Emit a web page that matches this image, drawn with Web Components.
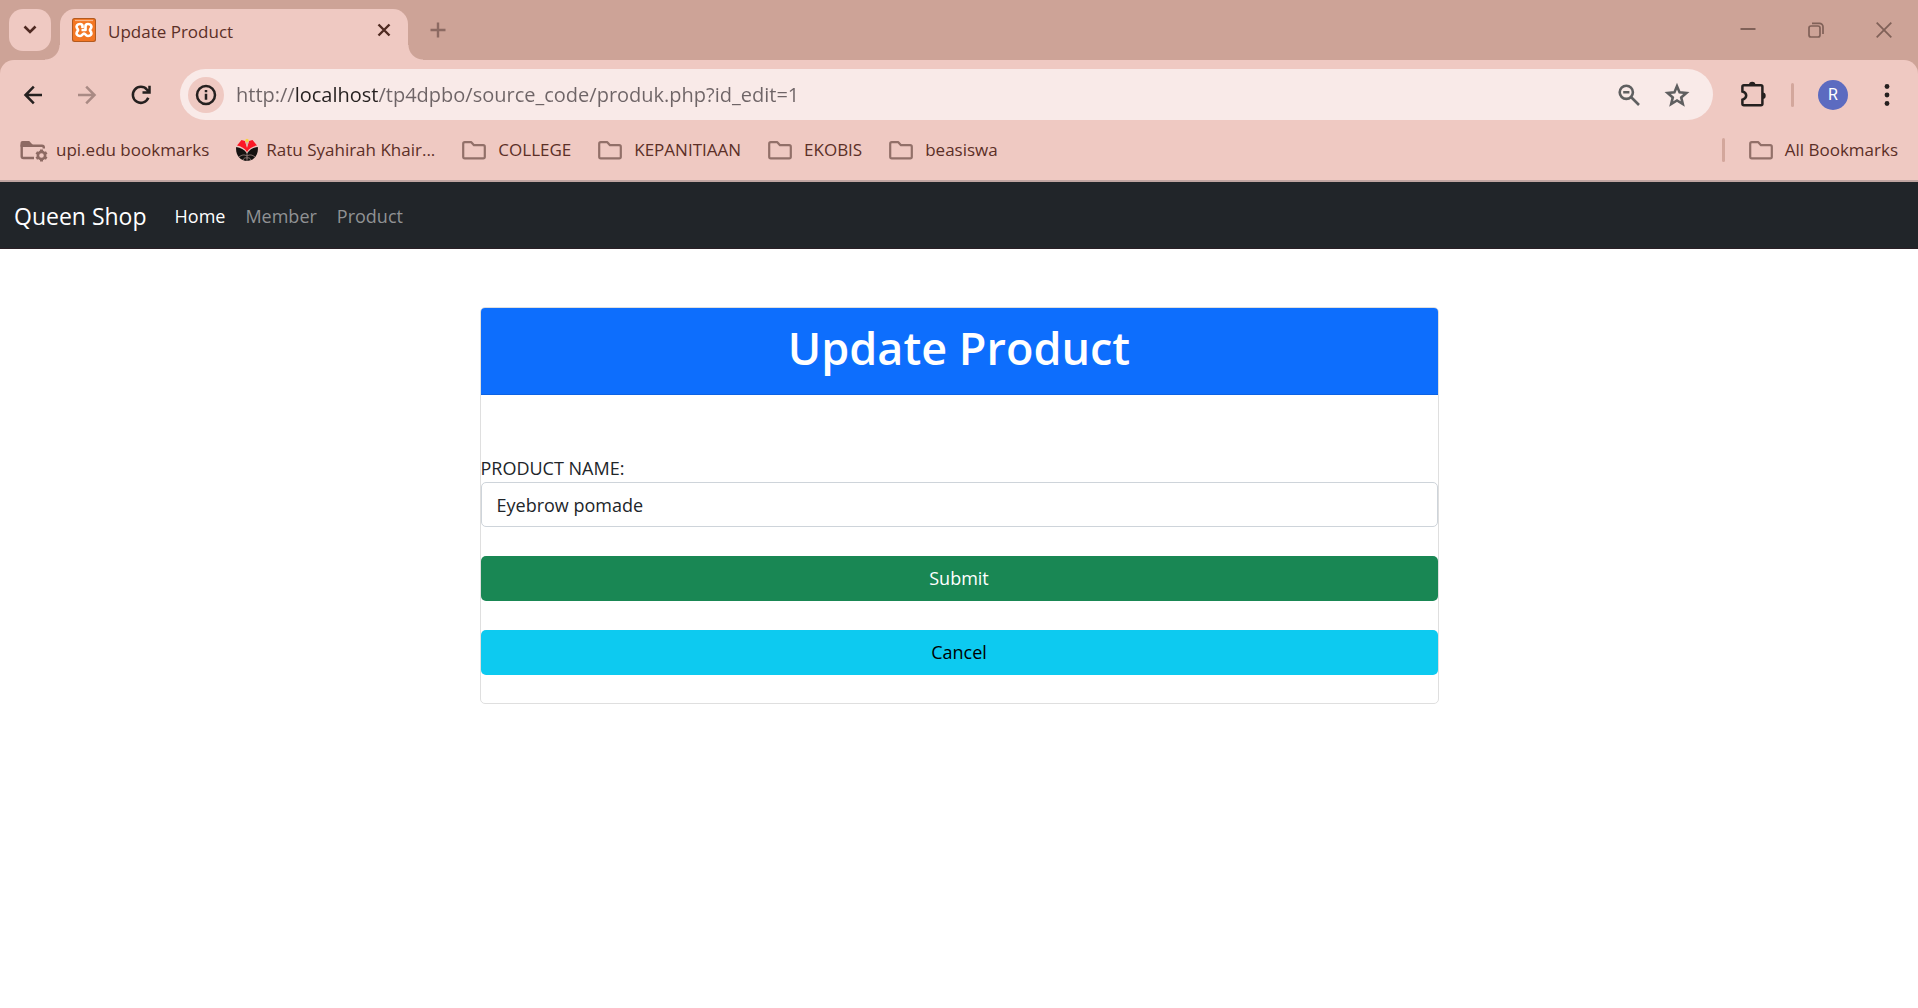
<!DOCTYPE html>
<html lang="en">
<head>
<meta charset="utf-8">
<title>Update Product</title>
<style>
  body { margin: 0; background: #fff; font-family: "Open Sans", "Noto Sans", sans-serif; }
</style>
</head>
<body>
<browser-frame>
  <tab-strip slot="tabs">Update Product</tab-strip>
  <tool-bar slot="toolbar"></tool-bar>
  <bookmarks-bar slot="bookmarks">
    <bookmark-item icon="managed">upi.edu bookmarks</bookmark-item>
    <bookmark-item icon="crest">Ratu Syahirah Khair...</bookmark-item>
    <bookmark-item>COLLEGE</bookmark-item>
    <bookmark-item>KEPANITIAAN</bookmark-item>
    <bookmark-item>EKOBIS</bookmark-item>
    <bookmark-item>beasiswa</bookmark-item>
    <bookmark-item slot="end">All Bookmarks</bookmark-item>
  </bookmarks-bar>
</browser-frame>
<shop-navbar>
  <span slot="brand">Queen Shop</span>
  <nav-link active>Home</nav-link>
  <nav-link>Member</nav-link>
  <nav-link>Product</nav-link>
</shop-navbar>
<product-card>
  <span slot="title">Update Product</span>
  <product-form></product-form>
</product-card>

<script>
const RESET = `
  :host, *, *::before, *::after { box-sizing: border-box; }
  button { border: 0; padding: 0; margin: 0; background: none; font: inherit; color: inherit; display: grid; place-items: center; flex: none; cursor: pointer; }
  a { color: inherit; text-decoration: none; }
  svg { display: block; flex: none; fill: none; }
`;
function define(name, css, html) {
  customElements.define(name, class extends HTMLElement {
    constructor() {
      super();
      this.attachShadow({ mode: "open" }).innerHTML =
        `<style>${RESET}${css}</style>` + (typeof html === "function" ? html(this) : html);
    }
  });
}

define("browser-frame", `
  :host { display: block; background: #cda397; color: #5b2f27; font-size: 17px; }
  .panel { background: #efc9c2; border-radius: 14px 14px 0 0; border-bottom: 2px solid #c0a5a1; }
`, `<slot name="tabs"></slot><div class="panel"><slot name="toolbar"></slot><slot name="bookmarks"></slot></div>`);

define("tab-strip", `
  :host { display: flex; height: 60px; padding: 9px 0 0 9px; line-height: 24px; }
  .search { width: 42px; height: 42px; border-radius: 14px; background: #efc9c2; }
  .tab { position: relative; width: 348px; margin-left: 9px; padding: 0 12px; display: flex; align-items: center; gap: 12px; background: #efc9c2; border-radius: 15px 15px 0 0; }
  .tab::before, .tab::after { content: ""; position: absolute; bottom: 0; width: 15px; height: 15px; }
  .tab::before { right: 100%; background: radial-gradient(circle at 0 0, transparent 14px, #efc9c2 15px); }
  .tab::after { left: 100%; background: radial-gradient(circle at 100% 0, transparent 14px, #efc9c2 15px); }
  .icon, .close { margin-bottom: 9px; }
  .title { flex: 1; margin-bottom: 6px; }
  .close { width: 24px; height: 24px; }
  .new { width: 42px; height: 42px; margin-left: 9px; color: #8c6a62; }
  .window { margin-left: auto; display: flex; color: #806158; }
  .window button { width: 68px; height: 42px; }
`, `
  <button class="search" aria-label="Search tabs"><svg width="14" height="10" stroke="#4f2a22" stroke-width="2.600"><path d="M1.500 1.500 7 7l5.500-5.500"/></svg></button>
  <div class="tab">
    <svg class="icon" width="24" height="24" viewBox="0 0 24 24"><rect width="24" height="24" rx="2.500" fill="#b35a1f"/><rect x="1" y="1" width="22" height="22" rx="2" fill="#f37623"/><path d="M3 2.500h18" stroke="#f9b689" stroke-width="1.200"/><path d="M10.500 10V8.200C10.500 6.800 9.500 6 8 6 5 6 4.300 8.200 4.700 9.300c.3 1.300 1.300 1.700 1.300 2.700s-1 1.400-1.300 2.700C4.300 15.800 5 18 8 18c2.500 0 2.500-2.500 4-2.500S13.500 18 16 18c3 0 3.700-2.200 3.300-3.300-.3-1.300-1.300-1.700-1.300-2.700s1-1.400 1.300-2.700C19.700 8.200 19 6 16 6c-1.500 0-2.500.8-2.500 2.200V12H9.500" stroke="#fff" stroke-width="2.700" stroke-linejoin="round"/></svg>
    <span class="title"><slot></slot></span>
    <button class="close" aria-label="Close tab"><svg width="14" height="14" stroke="#4f2a22" stroke-width="2.400"><path d="m1.500 1.500 11 11m0-11-11 11"/></svg></button>
  </div>
  <button class="new" aria-label="New tab"><svg width="16" height="16" stroke="currentColor" stroke-width="2.400"><path d="M8 .5v15M.5 8h15"/></svg></button>
  <div class="window">
    <button aria-label="Minimize"><svg width="16" height="16" stroke="currentColor" stroke-width="2"><path d="M.5 7h15"/></svg></button>
    <button aria-label="Restore"><svg width="16" height="16" stroke="currentColor" stroke-width="1.700"><rect x="1" y="4" width="11" height="11" rx="2"/><path d="M4 1.300h7.500a3.500 3.500 0 0 1 3.500 3.500V12"/></svg></button>
    <button aria-label="Close window"><svg width="16" height="16" stroke="currentColor" stroke-width="1.800"><path d="m.7.7 14.600 14.600m0-14.600L.7 15.300"/></svg></button>
  </div>`);

define("tool-bar", `
  :host { display: flex; align-items: center; height: 69px; padding: 0 10px 0 12px; gap: 12px; color: #25201f; }
  .nav { width: 42px; height: 42px; }
  .off { color: #a98a84; }
  form { flex: 1; display: flex; align-items: center; height: 51px; margin: 0 7px 0 6px; padding: 0 18px 0 8px; gap: 12px; border-radius: 26px; background: #f9eae8; color: #5f5f60; }
  .info { width: 36px; height: 36px; border-radius: 50%; background: #efc9c2; color: #25201f; }
  input { flex: 1; min-width: 0; height: 36px; border: 0; padding: 0; outline: 0; font: inherit; font-size: 20px; color: #6e6466;
    background: linear-gradient(90deg, #6e6466 59px, #25201f 59px 142px, #6e6466 142px); -webkit-background-clip: text; background-clip: text; -webkit-text-fill-color: transparent; }
  form .act { width: 36px; height: 42px; }
  .sep { width: 3px; height: 24px; border-radius: 2px; background: #d3a79c; }
  .avatar { width: 30px; height: 30px; margin: 0 6px 0 12px; border-radius: 50%; background: #5c6bc0; color: #fff; font: 16px Roboto, sans-serif; }
  .ext { width: 42px; height: 42px; margin-right: 5px; }
  .menu { width: 42px; height: 42px; }
`, `
  <button class="nav" aria-label="Back"><svg width="20" height="20" stroke="currentColor" stroke-width="2.500"><path d="M19 10H2.500m8.300-8.300L2.500 10l8.300 8.300"/></svg></button>
  <button class="nav off" aria-label="Forward"><svg width="20" height="20" stroke="currentColor" stroke-width="2.500"><path d="M1 10h16.500M9.200 1.700l8.300 8.300-8.300 8.300"/></svg></button>
  <button class="nav" aria-label="Reload"><svg width="20" height="20" stroke="currentColor" stroke-width="2.500"><path d="M17.300 12.800A8 8 0 1 1 16 4.700l2 2.300M18.500.8v6.700h-7"/></svg></button>
  <form>
    <button type="button" class="info" aria-label="Site information"><svg width="22" height="22"><circle cx="11" cy="11" r="9" stroke="currentColor" stroke-width="2.500"/><path d="M11 9.800v6M11 6v2.200" stroke="currentColor" stroke-width="2.500"/></svg></button>
    <input type="text" aria-label="Address" value="http://localhost/tp4dpbo/source_code/produk.php?id_edit=1" spellcheck="false">
    <button type="button" class="act" aria-label="Zoom"><svg width="22" height="22" stroke="currentColor" stroke-width="2.600"><circle cx="8.300" cy="8.300" r="6.600"/><path d="m13 13 8 8M5.200 8.300h6.200"/></svg></button>
    <button type="button" class="act" aria-label="Bookmark this page"><svg width="26" height="26" viewBox="0 0 26 26" stroke="currentColor" stroke-width="2.600"><path d="m13 4.200 2.600 6.200 6.700.6-5.100 4.400 1.600 6.600-5.800-3.500L7.200 22l1.600-6.600L3.700 11l6.700-.6z"/></svg></button>
  </form>
  <button class="ext" aria-label="Extensions"><svg width="28" height="28" viewBox="0 0 28 28"><path d="M3.400 10.500V5.700q0-1.500 1.500-1.500h17q1.500 0 1.500 1.500v17q0 1.500-1.500 1.500h-17q-1.500 0-1.500-1.500v-4q3.800-1 3.800-4.100t-3.800-4.100z" stroke="currentColor" stroke-width="2.500"/><path d="M10 4a3.200 3.200 0 0 1 6.400 0zM23.500 11.500a3.200 3.200 0 0 1 0 6.400z" fill="currentColor"/></svg></button>
  <span class="sep"></span>
  <button class="avatar" aria-label="Profile R">R</button>
  <button class="menu" aria-label="Menu"><svg width="6" height="24"><g fill="#25201f"><circle cx="3" cy="3.500" r="2.400"/><circle cx="3" cy="12" r="2.400"/><circle cx="3" cy="20.500" r="2.400"/></g></svg></button>`);

define("bookmarks-bar", `
  :host { display: flex; align-items: center; height: 51px; padding: 0 20px 9px; }
  .list { display: flex; gap: 27px; flex: 1; }
  .sep { width: 3px; height: 24px; margin-right: 24px; border-radius: 2px; background: #d3a79c; }
`, `<div class="list"><slot></slot></div><span class="sep"></span><slot name="end"></slot>`);

const BOOKMARK_ICONS = {
  folder: `<svg width="24" height="24" stroke="#927069" stroke-width="2.200" stroke-linejoin="round"><path d="M2.800 4.200h6.500l2.700 3h9.200q1.600 0 1.600 1.600v10q0 1.600-1.600 1.600H2.800q-1.600 0-1.600-1.600v-13q0-1.600 1.600-1.600z"/></svg>`,
  managed: `<svg width="28" height="24" stroke="#8d6a63" stroke-width="2.400"><path d="M14 20H3.500q-1.800 0-1.800-1.800V7.700H22q1.800 0 1.800 1.800v1"/><path d="M.5 8.800V5q0-2 2-2h6.700l3.300 3.500V8.800z" fill="#8d6a63" stroke="none"/><circle cx="21.500" cy="17.500" r="3.600" stroke-width="2.600"/><path d="M21.500 11.500v2.600m0 6.800v2.600M16.300 14.500l2.200 1.300m6 3.400 2.200 1.300m-10.400 0 2.200-1.300m6-3.400 2.200-1.300" stroke-width="3"/></svg>`,
  crest: `<svg width="22" height="24" viewBox="1 0 22 24"><path d="M6.500 2 10 3l2 6 2-6 3.500-1L22 7.500c-4 .8-8 3-10 6.500-2-3.500-6-5.700-10-6.500z" fill="#fb1826"/><path d="m10 3 2 7 2-7z" fill="#ddb6a6"/><circle cx="12" cy="2.500" r="1.700" fill="#f8d33e"/><path d="M1.200 9c4.300.5 8.300 2.500 10.800 6.500C14.500 11.500 18.500 9.500 22.800 9c1 8-4 14-10.800 14S.2 17 1.200 9z" fill="#151211"/><path d="M12 15v8M4 19c3-2.500 5.500-2.500 8-1 2.500-1.500 5-1.500 8 1M8 22c.8-2 2.300-2.500 4-2 1.700-.5 3.200 0 4 2" stroke="#a48c88" stroke-width=".8"/></svg>`
};
define("bookmark-item", `
  :host { display: block; flex: none; }
  a { display: flex; align-items: center; gap: 12px; line-height: 24px; }
  .managed, .crest { gap: 8px; }
`, el => {
  const kind = el.getAttribute("icon") || "folder";
  return `<a href="#" class="${kind}">${BOOKMARK_ICONS[kind]}<span><slot></slot></span></a>`;
});

define("shop-navbar", `
  :host { display: block; background: #212529; color: #fff; border-bottom: 1px solid #2a1f25; }
  nav { display: flex; align-items: center; height: 66px; padding: 2px 14px 0; }
  .brand { font-size: 23px; line-height: 36px; margin-right: 18px; }
  .links { display: flex; font-size: 18px; line-height: 30px; }
`, `<nav><a class="brand" href="#"><slot name="brand"></slot></a><div class="links"><slot></slot></div></nav>`);

define("nav-link", `
  :host { display: block; color: #909294; }
  :host([active]) { color: #fff; }
  a { display: block; padding: 0 10px; }
`, `<a href="#"><slot></slot></a>`);

define("product-card", `
  :host { display: block; width: 50%; margin: 58px auto 0; border: 1px solid #dfdfdf; border-radius: 5px; color: #212529; }
  header { background: #0d6efd; border-bottom: 1px solid #0c63e4; border-radius: 4px 4px 0 0; padding: 11px 20px 17px; text-align: center; color: #fff; }
  h1 { margin: 0; font-size: 45px; line-height: 58px; font-weight: 600; }
`, `<header><h1><slot name="title"></slot></h1></header><slot></slot>`);

define("product-form", `
  :host { display: block; padding: 60px 0 28px; font-size: 18px; line-height: 27px; }
  form { display: grid; gap: 29px; }
  label { display: block; }
  input { display: block; width: 100%; height: 45px; padding: 0 15px; border: 1px solid #ced4da; border-radius: 5px; background: #fff; color: #212529; font: inherit; outline: 0; }
  button { width: 100%; height: 45px; border-radius: 5px; }
  .submit { background: #198754; color: #fff; }
  .cancel { background: #0dcaf0; color: #000; }
`, `<form>
    <div><label for="name">PRODUCT NAME:</label><input id="name" type="text" value="Eyebrow pomade"></div>
    <button type="button" class="submit">Submit</button>
    <button type="button" class="cancel">Cancel</button>
  </form>`);
</script>
</body>
</html>
